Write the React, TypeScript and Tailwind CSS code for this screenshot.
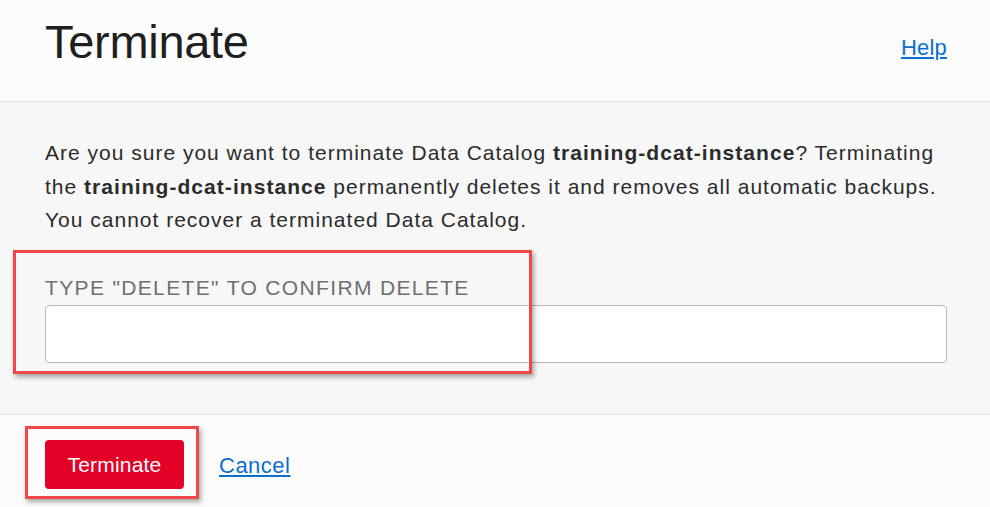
export default function App() {
  return (
    <div
      className="relative flex flex-col w-[990px] h-[507px] overflow-hidden bg-[#f7f7f7] text-[#161513]"
      style={{ fontFamily: '"Liberation Sans", Arial, sans-serif' }}
    >
      <header className="h-[102px] shrink-0 bg-[#fcfcfc] border-b border-[#e4e4e4] flex items-start justify-between pl-[45px] pr-[43px]">
        <h1 className="text-[47px] leading-none mt-[18px] tracking-[-0.3px] text-[#1f1f1f]">Terminate</h1>
        <a href="#" className="text-[22px] tracking-[0.2px] text-[#0b6fcf] underline mt-[31px]">Help</a>
      </header>

      <main className="flex-1 px-[45px] pt-[34px]">
        <p className="text-[21px] leading-[33.5px] tracking-[1px] text-[#2b2b2b]">
          Are you sure you want to terminate Data Catalog <b className="tracking-[1.05px]">training-dcat-instance</b>? Terminating the{' '}
          <b className="tracking-[1.05px]">training-dcat-instance</b> permanently deletes it and removes all automatic backups. You cannot recover a
          terminated Data Catalog.
        </p>
        <label className="block mt-[39px] text-[21px] leading-[24px] tracking-[1.35px] text-[#6f6f6f]">TYPE "DELETE" TO CONFIRM DELETE</label>
        <input className="mt-[5px] block w-[902px] h-[58px] bg-white border border-[#b8b8b8] rounded-[4px]" />
      </main>

      <footer className="h-[93px] shrink-0 bg-[#fcfcfc] border-t border-[#e4e4e4] flex items-start gap-[35px] pl-[45px] pt-[25px]">
        <button className="h-[49px] w-[139px] bg-[#e40027] rounded-[4px] text-white text-[21px] tracking-[0.2px]">Terminate</button>
        <a href="#" className="text-[22px] tracking-[0.5px] text-[#0b6fcf] underline mt-[9px]">Cancel</a>
      </footer>

      <div className="absolute left-[13px] top-[250px] w-[519px] h-[124px] border-[3px] border-[#f04848] shadow-[2px_3px_5px_rgba(0,0,0,0.35)]" />
      <div className="absolute left-[25px] top-[426px] w-[174px] h-[73px] border-[3px] border-[#f04848] shadow-[2px_3px_5px_rgba(0,0,0,0.35)]" />
    </div>
  )
}
